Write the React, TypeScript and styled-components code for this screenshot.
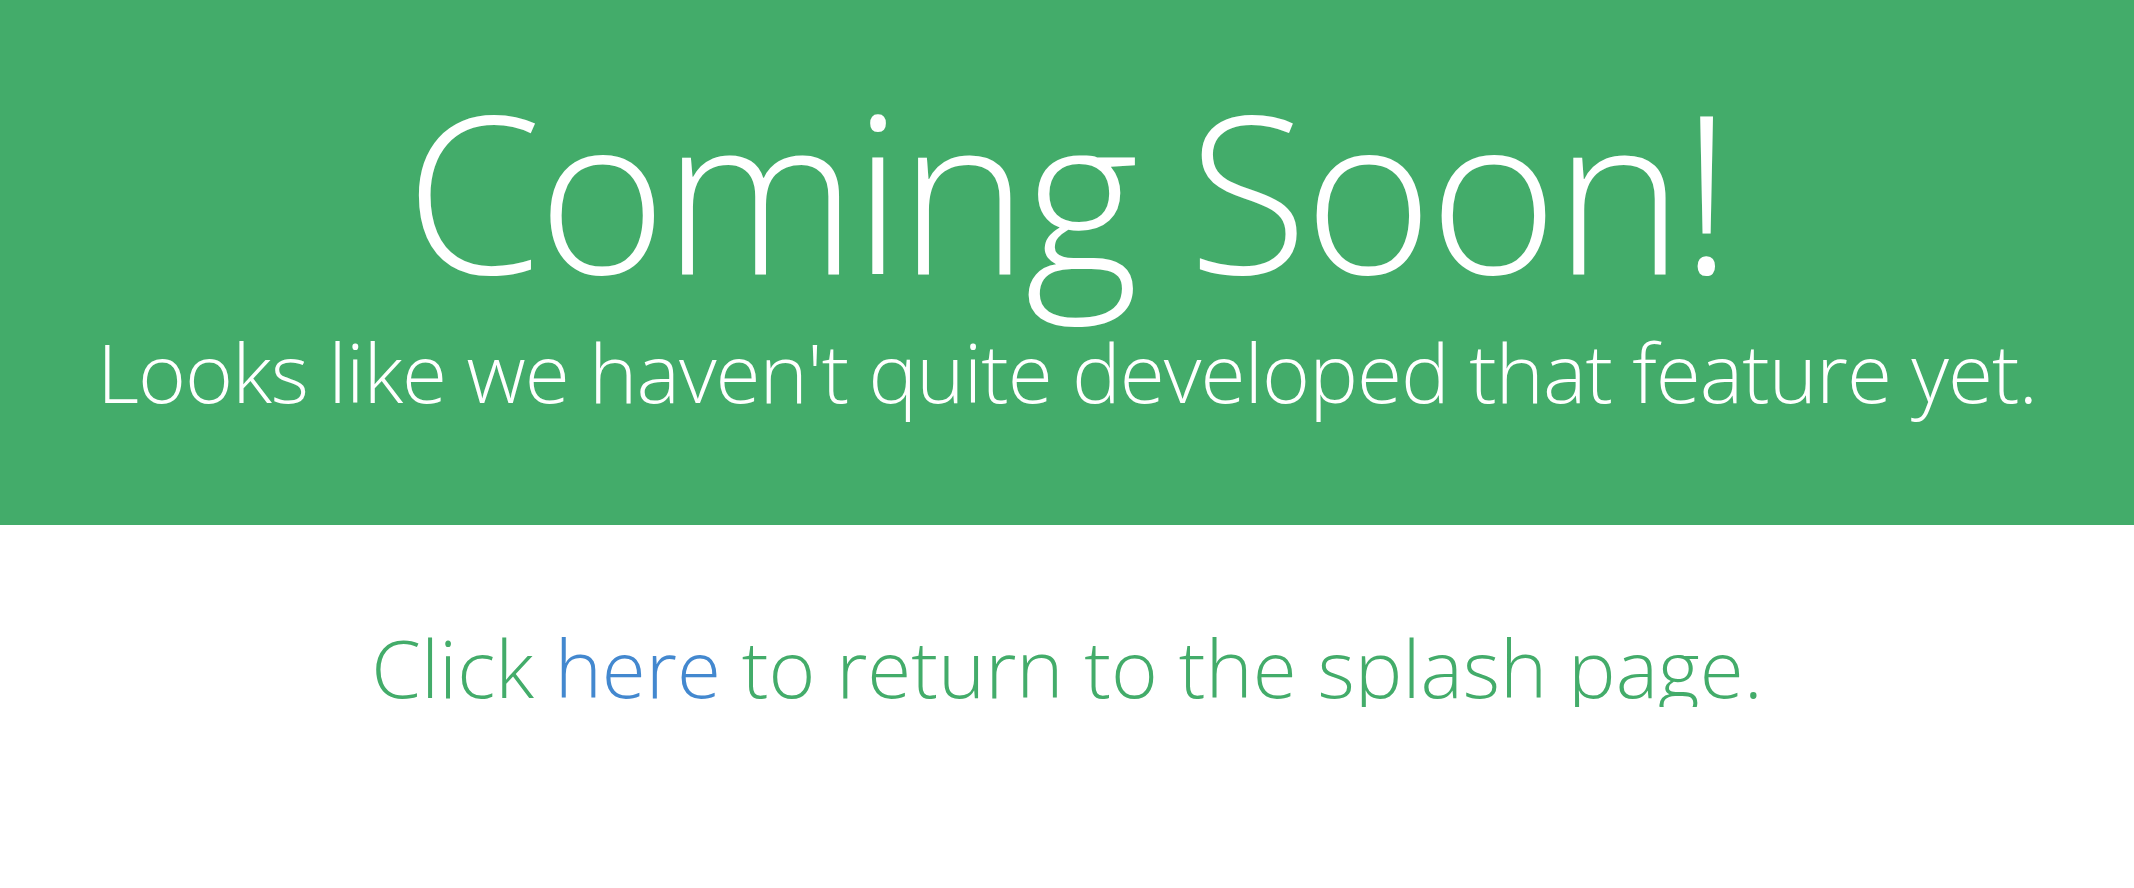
import React from "react";
import styled, { createGlobalStyle } from "styled-components";

const GlobalStyle = createGlobalStyle`
  html, body {
    margin: 0;
    padding: 0;
    background: #ffffff;
  }
  body {
    font-family: "Open Sans", "Noto Sans", sans-serif;
  }
`;

const Page = styled.main`
  display: flex;
  flex-direction: column;
  width: 100%;
`;

const Banner = styled.header`
  display: flex;
  flex-direction: column;
  align-items: center;
  box-sizing: border-box;
  height: 525px;
  padding-top: 79px;
  background: #43ac6a;
  color: #ffffff;
`;

const Title = styled.h1`
  margin: 0;
  font-family: "Open Sans", sans-serif;
  font-weight: 300;
  font-size: 220px;
  line-height: 220px;
  letter-spacing: -4px;
  text-align: center;
`;

const Subtitle = styled.p`
  margin: 31px 0 0;
  font-family: "Open Sans", sans-serif;
  font-weight: 300;
  font-size: 82px;
  line-height: 82px;
  letter-spacing: -1px;
  text-align: center;
`;

const Body = styled.section`
  display: flex;
  justify-content: center;
  padding-top: 102px;
`;

const Message = styled.p`
  margin: 0;
  font-family: "Open Sans", sans-serif;
  font-weight: 300;
  font-size: 80px;
  line-height: 80px;
  color: #43ac6a;
  text-align: center;
`;

const Link = styled.a`
  color: #4388cf;
  text-decoration: none;
`;

export default function App() {
  return (
    <>
      <GlobalStyle />
      <Page>
        <Banner>
          <Title>Coming Soon!</Title>
          <Subtitle>Looks like we haven't quite developed that feature yet.</Subtitle>
        </Banner>
        <Body>
          <Message>
            Click <Link href="#">here</Link> to return to the splash page.
          </Message>
        </Body>
      </Page>
    </>
  );
}
